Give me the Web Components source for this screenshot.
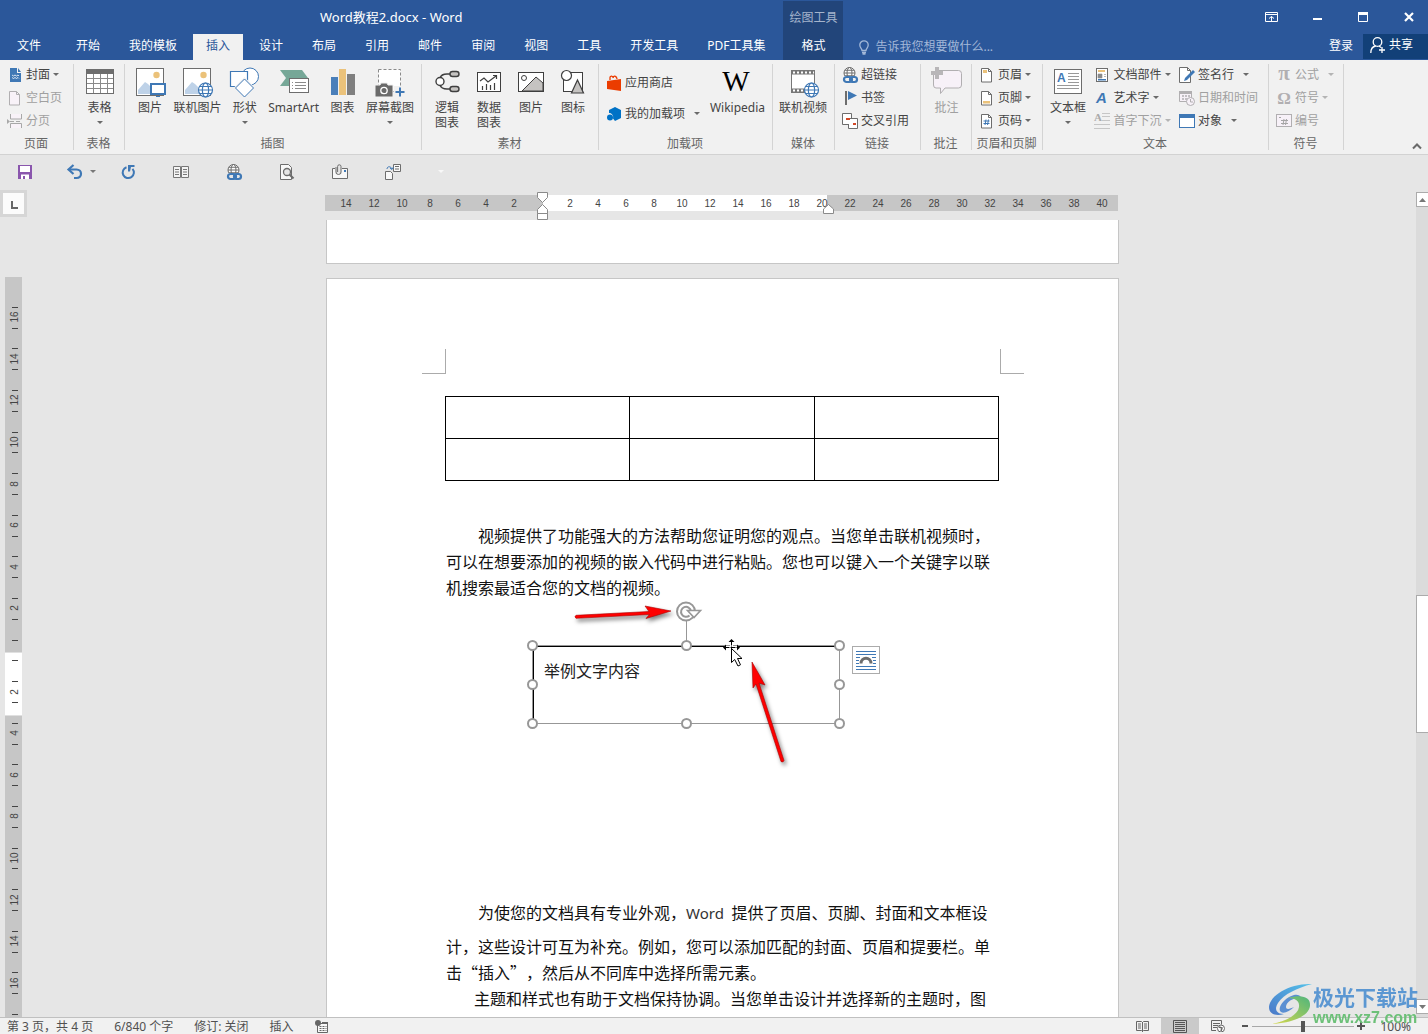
<!DOCTYPE html>
<html lang="zh-CN">
<head>
<meta charset="utf-8">
<title>Word教程2.docx - Word</title>
<style>
  html, body { height: 100%; margin: 0; }
  body { overflow: hidden; background: #e6e6e6; color: #444; font: 12px/16px "Noto Sans", "Noto Sans CJK SC", sans-serif; text-spacing-trim: space-all; }
</style>
</head>
<body>
<word-app></word-app>
<script>
const BTN = `button{font:inherit;color:inherit;background:none;border:0;margin:0;padding:0;cursor:pointer}svg{display:block}`;
function define(name, html, init) {
  const tpl = document.createElement('template');
  tpl.innerHTML = html;
  customElements.define(name, class extends HTMLElement {
    constructor() {
      super();
      this.attachShadow({ mode: 'open' }).append(tpl.content.cloneNode(true));
    }
    connectedCallback() { if (init && !this.ready) { this.ready = true; init(this, this.shadowRoot); } }
  });
}

const globe = (x, y, r, c, w) => `<g fill="#fff" stroke="${c}" stroke-width="${w}"><circle cx="${x}" cy="${y}" r="${r}"/><ellipse cx="${x}" cy="${y}" rx="${r * .45}" ry="${r}" fill="none"/><path fill="none" d="M${x - r} ${y}h${2 * r}M${x - r * .85} ${y - r * .5}h${r * 1.7}M${x - r * .85} ${y + r * .5}h${r * 1.7}"/></g>`;
const photo = `<rect x="2.5" y="1.5" width="27" height="27" fill="#fff" stroke="#6d6d6d"/><circle cx="22.500" cy="8" r="3.200" fill="#ebc27a"/><path d="M4 27V23L11 15l3 2 10 10z" fill="#bed2e8"/>`;
const chain = `<g fill="none" stroke="#3f78b5" stroke-width="2.200"><rect x="2" y="10" width="8" height="5" rx="2.500"/><rect x="8" y="10" width="7" height="5" rx="2.500"/></g>`;
const sheet = (c = '#6d6d6d', f = '#fff') => `<path d="M2.500 1.500h7l3 3v10.500h-10z" fill="${f}" stroke="${c}"/><path d="M9.500 1.500v3h3" fill="none" stroke="${c}"/>`;
const ICONS = {
  cover: `<path d="M3 1h7v5h4v9H3z" fill="#3f78b5"/><path d="M11 1l3 4h-3z" fill="#3f78b5"/><path d="M5 8l1.500 1L8 8l1.500 1L11 8l1 1M5 10.500l1.500 1 1.500-1 1.500 1 1.500-1 1 1" stroke="#fff" fill="none" stroke-width=".8"/>`,
  blank: sheet('#b1afb1', '#f8f2f8'),
  pagebreak: `<path d="M3.500 1v5h11V1M3.500 15v-4.500h11V15" fill="#f8f2f8" stroke="#a8a8a8"/><path d="M0 6l3 2.500L0 11z" fill="#a8a8a8"/><path d="M3 8.500h4M9 8.500h4" stroke="#a8a8a8"/>`,
  table: `<rect x="2.500" y="2.500" width="27" height="24" fill="#fff" stroke="#6d6d6d"/><path d="M2 2h28v5H2z" fill="#6d6d6d"/><path d="M9.500 7v19M16.500 7v19M23.500 7v19M3 11.500h26M3 16.500h26M3 21.500h26" stroke="#8a8a8a" fill="none"/>`,
  picture: photo + `<rect x="17" y="17" width="14" height="10" fill="#fff" stroke="#3f78b5" stroke-width="2"/><path d="M22 29h4v1h-4z" fill="#3f78b5"/>`,
  online: photo + globe(24.5, 23, 7, '#3f78b5', 1.2),
  shapes: `<circle cx="21" cy="9.500" r="8.500" fill="#fff" stroke="#3f78b5"/><path d="M1.500 4.500h17v15h-17z" fill="#fff" stroke="#3f78b5" stroke-width="1.200"/><path d="M15.500 12l9 9-9 9-9-9z" fill="#fff" stroke="#f1f1f1" stroke-width="3"/><path d="M15.500 12l9 9-9 9-9-9z" fill="#fff" stroke="#3f78b5"/>`,
  smartart: `<path d="M2 3h22l6 8-6 8H2l6-8z" fill="#76a797"/><rect x="11.500" y="11.500" width="19" height="14" fill="#fff" stroke="#6d6d6d"/><path d="M14 15.500h1M17 15.500h11M14 18.500h1M17 18.500h11M14 21.500h1M17 21.500h11" stroke="#8a8a8a"/>`,
  chart: `<path d="M4 10h7v18H4z" fill="#4a7fba"/><path d="M12 2h7v26h-7z" fill="#ebc27a"/><path d="M20 7h8v21h-8z" fill="#7f7f7f"/>`,
  screenshot: `<rect x="4.500" y="2.500" width="22" height="22" fill="#fff" stroke="#8a8a8a" stroke-dasharray="3 2"/><path d="M1 18h5l1-2h6l1 2h5v12H1z" fill="#6a6a6a" stroke="#f1f1f1"/><circle cx="10" cy="23.500" r="3.200" fill="#6a6a6a" stroke="#fff" stroke-width="1.300"/><path d="M20 19h11v11H20z" fill="#f1f1f1"/><path d="M26 20.500v9M21.500 25h9" stroke="#3f78b5" stroke-width="2"/>`,
  logic: `<g stroke="#3f3f3f" stroke-width="1.400" fill="none"><path d="M19 7h-3c-4 0-6 1-7 4M19 22h-3c-4 0-6-1-7-4"/><circle cx="9" cy="14.500" r="4" fill="#fff"/><rect x="19" y="4.500" width="9" height="5" rx="2.500" fill="#c5c3c1"/><rect x="19" y="19.500" width="9" height="5" rx="2.500" fill="#c5c3c1"/></g>`,
  data: `<rect x="4.500" y="5.500" width="23" height="19" fill="#fff" stroke="#3f3f3f"/><path d="M7 14l4-3 4 4 8-6M20 8.500h3.500V12M9.500 19v4M13.500 17v6M17.500 18v5M21.500 16v7" fill="none" stroke="#3f3f3f" stroke-width="1.200"/>`,
  image: `<rect x="3.500" y="5.500" width="25" height="19" fill="#fff" stroke="#3f3f3f"/><path d="M7 24l14-14 7 6v8z" fill="#c5c3c1" stroke="#3f3f3f"/><circle cx="9" cy="11" r="2.500" fill="#fff" stroke="#3f3f3f"/>`,
  glyphs: `<rect x="6.500" y="5.500" width="19" height="19" fill="#fff" stroke="#3f3f3f"/><circle cx="9.500" cy="8.500" r="5" fill="#fff" stroke="#3f3f3f" stroke-width="1.200"/><path d="M20.500 13l6 13h-12z" fill="#c5c3c1" stroke="#3f3f3f" stroke-width="1.200"/>`,
  store: `<path d="M1 6l14-2v12L1 14z" fill="#eb3c00"/><path d="M4 5V2.500C4 .5 7 .5 7.500 3M7 3c0-3 4-2 4 1" fill="none" stroke="#eb3c00" stroke-width="1.300"/>`,
  addins: `<path d="M9 1l6 3v8l-6 3-2-2.500C8 9 5 7 3 7V4z" fill="#0072c6"/><circle cx="4" cy="11.500" r="3" fill="#0072c6"/>`,
  wiki: `<text x="15" y="24" text-anchor="middle" font-family="Liberation Serif" font-size="29" fill="#000">W</text>`,
  video: `<rect x="4.500" y="3.500" width="23" height="22" fill="#fff" stroke="#777"/><path d="M5 5.500h23M5 23.500h15" stroke="#777" stroke-width="4"/><path d="M6 5.500h21M6 23.500h13" stroke="#fff" stroke-width="2" stroke-dasharray="2 2"/>` + globe(24.5, 23, 7, '#3f78b5', 1.2),
  link: globe(7.5, 6, 5.5, '#6d6d6d', 1) + `<path d="M1 9h15v7H1z" fill="#f1f1f1"/>` + chain,
  quicklink: globe(7.5, 6, 5.5, '#6d6d6d', 1) + `<path d="M1 9h15v7H1z" fill="#e6e6e6"/>` + chain,
  bookmark: `<path d="M3 1h2v14H3z" fill="#6d6d6d"/><path d="M6 1l9 4.500L6 10z" fill="#3f78b5"/>`,
  xref: `<path d="M.5.500h9v11h-9z" fill="#fff" stroke="#6d6d6d"/><path d="M6.500 5.500h9v10h-9z" fill="#fff" stroke="#6d6d6d"/><path d="M6 6h3.500v5H6z" fill="#fff"/><path d="M4 5h4v2H4zM11 10h3v2h-3z" fill="#d24726"/>`,
  comment: `<path d="M4.500 3.500h23q3 0 3 3V18q0 3-3 3H14l-4.500 5.500V21H5q-2.500 0-2.500-3V8z" fill="#f7f1f8" stroke="#b1afb1"/><path d="M4 0h4v4h4v4H8v4H4V8H0V4h4z" fill="#b8b6b8"/>`,
  header: sheet() + `<path d="M4 3h4v3H4z" fill="#ebc27a"/>`,
  footer: sheet() + `<path d="M4 11h7v2.500H4z" fill="#ebc27a"/>`,
  pageno: sheet() + `<path d="M7 6.500L6 12M9.500 6.500L8.500 12M4.500 8h6M4.500 10.500h6" stroke="#3f78b5" fill="none"/>`,
  textbox: `<rect x="2.500" y="2.500" width="27" height="24" fill="#fff" stroke="#6d6d6d"/><text x="5" y="15" font-family="Liberation Sans" font-size="12" font-weight="bold" fill="#3f78b5">A</text><path d="M16 6.500h11M16 9.500h11M16 12.500h11M16 15.500h11M5 18.500h22M5 21.500h22" stroke="#999"/>`,
  parts: `<rect x="2.500" y="1.500" width="11" height="13" fill="#fff" stroke="#6d6d6d"/><path d="M4 3h7v2H4z" fill="#ebc27a"/><path d="M4 7h4v4H4zM10 7.500h2M10 9.500h2" fill="#8a8a8a" stroke="#8a8a8a" stroke-width=".6"/><path d="M4 12h8v1.500H4z" fill="#3f78b5"/>`,
  wordart: `<text x="2" y="13" font-family="Liberation Sans" font-size="15" font-weight="bold" font-style="italic" fill="#3f78b5">A</text>`,
  dropcap: `<text x="0" y="8" font-family="Liberation Serif" font-size="11" font-weight="bold" fill="#aaa">A</text><path d="M8 .5h8M8 3.500h8M8 7.500h8M0 11.500h16M0 15.500h16" stroke="#c6c6c6"/>`,
  sign: `<path d="M.5.500h8l3 3v12h-11z" fill="#fff" stroke="#6d6d6d"/><path d="M8.500.500v3h3" fill="none" stroke="#6d6d6d"/><path d="M14 3l2 2-8 8-3 1 1-3z" fill="#3f78b5"/>`,
  date: `<path d="M.5 1.500h12v10H.5z" fill="#f7f1f8" stroke="#b1afb1"/><path d="M0 1h13v3H0z" fill="#b1afb1"/><path d="M3 6h2M6 6h2M9 6h2M3 9h2M6 9h2" stroke="#b1afb1" stroke-width="1.500"/><circle cx="11.500" cy="11.500" r="4" fill="#f7f1f8" stroke="#b1afb1"/><path d="M11.500 9v3H14" fill="none" stroke="#b1afb1"/>`,
  object: `<rect x=".5" y="1.500" width="15" height="13" fill="#fff" stroke="#3f78b5"/><path d="M0 1h16v4H0z" fill="#3f78b5"/>`,
  formula: `<text x="8" y="13" text-anchor="middle" font-family="Liberation Serif" font-size="21" font-weight="bold" fill="#b1afb1">π</text>`,
  omega: `<text x="8" y="14" text-anchor="middle" font-family="Liberation Serif" font-size="17" font-weight="bold" fill="#b1afb1">Ω</text>`,
  number: `<rect x=".5" y="1.500" width="15" height="12" fill="#f7f1f8" stroke="#b1afb1"/><path d="M3 4.500h2M8 6L7 12M10.500 6l-1 6M5 7.500h7M5 10.500h7" stroke="#a5a5a5" fill="none"/>`,
  save: `<path d="M1 1h14v14H1z" fill="#8a56ad"/><path d="M3 2h10v6H3z" fill="#fff"/><path d="M4 10.500h8V15H4z" fill="#fff"/><path d="M6 12h2v3H6z" fill="#8a56ad"/>`,
  undo: `<path d="M3 5.500h6.500c6 0 6 8.500 0 8.500H7" fill="none" stroke="#3f78b5" stroke-width="2.200"/><path d="M6.500 1L1.500 5.500l5 4.500" fill="none" stroke="#3f78b5" stroke-width="2.200"/>`,
  redo: `<path d="M6.500 3.200A5.600 5.600 0 1 0 12.500 4.800" fill="none" stroke="#3f78b5" stroke-width="2"/><path d="M8 1h6.500v2H11l-1 4.500H8z" fill="#3f78b5"/>`,
  columns: `<path d="M.5 2.500h7v11h-7zM8.500 2.500h7v11h-7z" fill="#f4f4f4" stroke="#777"/><path d="M2 5.500h4M2 8h4M2 10.500h4M10 5.500h4M10 8h4M10 10.500h4" stroke="#777"/>`,
  preview: `<path d="M1.500.500h8l3 3v12h-11z" fill="#f8f8f8" stroke="#6d6d6d"/><circle cx="8" cy="8" r="3.500" fill="#e6e6e6" stroke="#6d6d6d" stroke-width="1.300"/><path d="M10.500 10.500l4 4" stroke="#6d6d6d" stroke-width="2.200"/>`,
  attach: `<path d="M.5 4.500h15v10H.500z" fill="#f8f8f8" stroke="#6d6d6d"/><path d="M3 0h7v10H3z" fill="#e6e6e6"/><path d="M4 3v5a2.500 2.500 0 0 0 5 0V2.500a1.700 1.700 0 0 0-3.400 0V8" fill="none" stroke="#6d6d6d"/><path d="M12 6h2v2h-2z" fill="#3f78b5"/>`,
  insertdoc: `<path d="M.5 7.500h5l2 2v6h-7z" fill="#f8f8f8" stroke="#6d6d6d"/><path d="M8.500.500h7v7h-7z" fill="#f8f8f8" stroke="#6d6d6d"/><path d="M10 2.500h4M10 5h4" stroke="#6d6d6d"/><path d="M2 5c0-3 4-3 5 0M5 4l2 1.500L8.500 3" fill="none" stroke="#3f78b5"/>`
};

/* glyph drawn from the icon set */
define('ui-icon', `<style>:host{display:block;flex:none;width:var(--s,16px);height:var(--s,16px)}svg{display:block;width:100%;height:100%;overflow:visible}</style>`, (el, root) => {
  const n = el.getAttribute('size') || 16;
  el.style.setProperty('--s', n + 'px');
  root.innerHTML += `<svg viewBox="0 0 ${n} ${n}" aria-hidden="true">${ICONS[el.getAttribute('name')]}</svg>`;
});

define('ribbon-button', `<style>${BTN}
  :host{display:block;flex:none}
  button{display:flex;align-items:center;gap:3px;height:23px;white-space:nowrap}
  i{border:3px solid transparent;border-top-color:#6a6a6a;border-bottom:0;display:none}
  :host([caret]) i{display:block}
  :host([caret=far]) i{margin-left:6px}
  :host([big]) button{flex-direction:column;gap:1px;height:auto;min-width:32px;padding-top:4px;line-height:15px}
  :host([big]) i{margin:5px auto 0}
  :host([off]) button{color:#a0a0a0}
  :host([off]) i{border-top-color:#b4b4b4}
</style><button><ui-icon></ui-icon><span><slot></slot></span><i></i></button>`, (el, root) => {
  const old = root.querySelector('ui-icon'), ic = document.createElement('ui-icon');
  ic.setAttribute('name', el.getAttribute('icon'));
  ic.setAttribute('size', el.hasAttribute('big') ? 32 : 16);
  old.replaceWith(ic);
  if (el.hasAttribute('off')) root.querySelector('button').disabled = true;
});

define('ribbon-group', `<style>
  :host{display:flex;flex-direction:column;flex:none;box-sizing:border-box;width:var(--w);padding:3px 0 0;background:linear-gradient(#d4d4d4,#d4d4d4) right 4px/1px 86px no-repeat}
  .body{display:flex;justify-content:space-between;height:69px;padding:0 var(--r,8px) 0 var(--l,8px)}
  .label{text-align:center;line-height:16px;margin-top:4px;padding-right:2px;color:#666}
  ::slotted(div){display:flex;flex-direction:column}
  ::slotted(.two){gap:8px;padding-top:8px}
  ::slotted([big]:only-child){margin:auto;margin-top:0}
</style><div class="body"><slot></slot></div><div class="label"></div>`, (el, root) => {
  root.querySelector('.label').textContent = el.getAttribute('label');
});

define('ribbon-bar', `<style>${BTN}
  :host{display:flex;flex:none;height:94px;background:#f1f1f1;border-bottom:1px solid #d2d2d2}
  .fold{margin:auto 4px 4px auto;width:14px;height:8px}
</style>
<ribbon-group label="页面" style="--w:74px;--l:7px"><div><ribbon-button icon="cover" caret>封面</ribbon-button><ribbon-button icon="blank" off>空白页</ribbon-button><ribbon-button icon="pagebreak" off>分页</ribbon-button></div></ribbon-group>
<ribbon-group label="表格" style="--w:51px"><ribbon-button big caret icon="table">表格</ribbon-button></ribbon-group>
<ribbon-group label="插图" style="--w:297px;--l:9px"><ribbon-button big icon="picture">图片</ribbon-button><ribbon-button big icon="online">联机图片</ribbon-button><ribbon-button big caret icon="shapes">形状</ribbon-button><ribbon-button big icon="smartart">SmartArt</ribbon-button><ribbon-button big icon="chart">图表</ribbon-button><ribbon-button big caret icon="screenshot">屏幕截图</ribbon-button></ribbon-group>
<ribbon-group label="素材" style="--w:177px;--l:9px;--r:10px"><ribbon-button big icon="logic">逻辑<br>图表</ribbon-button><ribbon-button big icon="data">数据<br>图表</ribbon-button><ribbon-button big icon="image">图片</ribbon-button><ribbon-button big icon="glyphs">图标</ribbon-button></ribbon-group>
<ribbon-group label="加载项" style="--w:174px;--l:7px"><div class="two"><ribbon-button icon="store">应用商店</ribbon-button><ribbon-button caret="far" icon="addins">我的加载项</ribbon-button></div><ribbon-button big icon="wiki">Wikipedia</ribbon-button></ribbon-group>
<ribbon-group label="媒体" style="--w:62px;--l:6px;--r:8px"><ribbon-button big icon="video">联机视频</ribbon-button></ribbon-group>
<ribbon-group label="链接" style="--w:86px;--l:7px"><div><ribbon-button icon="link">超链接</ribbon-button><ribbon-button icon="bookmark">书签</ribbon-button><ribbon-button icon="xref">交叉引用</ribbon-button></div></ribbon-group>
<ribbon-group label="批注" style="--w:51px"><ribbon-button big off icon="comment">批注</ribbon-button></ribbon-group>
<ribbon-group label="页眉和页脚" style="--w:71px;--l:7px"><div><ribbon-button caret icon="header">页眉</ribbon-button><ribbon-button caret icon="footer">页脚</ribbon-button><ribbon-button caret icon="pageno">页码</ribbon-button></div></ribbon-group>
<ribbon-group label="文本" style="--w:226px;--l:7px;--r:11px"><ribbon-button big caret icon="textbox">文本框</ribbon-button><div><ribbon-button caret icon="parts">文档部件</ribbon-button><ribbon-button caret icon="wordart">艺术字</ribbon-button><ribbon-button caret off icon="dropcap">首字下沉</ribbon-button></div><div><ribbon-button caret="far" icon="sign">签名行</ribbon-button><ribbon-button off icon="date">日期和时间</ribbon-button><ribbon-button caret="far" icon="object">对象</ribbon-button></div></ribbon-group>
<ribbon-group label="符号" style="--w:75px;--l:7px"><div><ribbon-button caret="far" off icon="formula">公式</ribbon-button><ribbon-button caret off icon="omega">符号</ribbon-button><ribbon-button off icon="number">编号</ribbon-button></div></ribbon-group>
<button class="fold" aria-label="折叠功能区"><svg width="14" height="8"><path d="M3 6.500l4-4 4 4" fill="none" stroke="#6a6a6a" stroke-width="2"/></svg></button>`);

define('word-header', `<style>${BTN}
  :host{display:grid;flex:none;grid-template:34px 26px/auto auto 1fr;background:#2b579a;color:#fff}
  h1{margin:0;font:inherit;font-size:13px;text-align:center;line-height:35px;padding-left:4px}
  nav{display:flex;gap:3px}
  nav button,.ctx button{padding:0 13px 3px;height:26px;white-space:nowrap}
  nav button:first-child{padding:0 19px 3px 17px}
  nav button.on{background:#f1f1f1;color:#2b579a}
  .ctx{grid-area:1/2/3/3;margin:1px 0 0 5px;display:flex;flex-direction:column;background:#22457a;width:60px;text-align:center}
  .ctx span{line-height:33px;color:#a5b4cc}
  .win{grid-area:1/3;display:flex;justify-content:flex-end;gap:8px}
  .win button{width:38px;display:grid;place-items:center}
  .tools{grid-area:2/3;display:flex;align-items:center}
  nav{grid-area:2/1}
  label{display:flex;align-items:center;gap:6px;padding-left:16px;flex:1;line-height:23px}
  input{flex:1;min-width:0;font:inherit;color:#fff;background:none;border:0;padding:0 0 2px;outline:0;height:24px;box-sizing:border-box}
  input::placeholder{color:#a3b8d8;opacity:1}
  a{color:#fff;text-decoration:none;padding:0 10px 2px}
  .share{align-self:stretch;width:65px;margin-bottom:1px;background:#124078;display:flex;align-items:center;gap:3px;padding:0 0 3px 7px}
</style>
<h1>Word教程2.docx - Word</h1>
<nav><button>文件</button><button>开始</button><button>我的模板</button><button class="on">插入</button><button>设计</button><button>布局</button><button>引用</button><button>邮件</button><button>审阅</button><button>视图</button><button>工具</button><button>开发工具</button><button>PDF工具集</button></nav>
<div class="ctx"><span>绘图工具</span><button>格式</button></div>
<div class="win">
 <button aria-label="功能区显示选项"><svg width="13" height="11"><path d="M.5.500h12v9H.500zM0 2.500h13M6.500 9V4.500M4 6.500l2.500-2 2.500 2" fill="none" stroke="#fff"/></svg></button>
 <button aria-label="最小化"><svg width="9" height="8"><path d="M0 5h9v2H0z" fill="#fff"/></svg></button>
 <button aria-label="最大化"><svg width="10" height="10"><path d="M.5.500h9v9h-9zM0 1.500h10" fill="none" stroke="#fff"/><path d="M0 0h10v3H0z" fill="#fff"/></svg></button>
 <button aria-label="关闭"><svg width="10" height="10"><path d="M1 1l8 8M9 1l-8 8" stroke="#fff" stroke-width="2.200"/></svg></button>
</div>
<div class="tools">
 <label><svg width="10" height="15"><path d="M3 10.500C3 8.500.800 8 .800 5a4.200 4.200 0 0 1 8.400 0c0 3-2.200 3.500-2.200 5.500zM3 12.500h4M3.500 14h3" fill="none" stroke="#a3b8d8" stroke-width="1.300"/></svg><input aria-label="告诉我您想要做什么" placeholder="告诉我您想要做什么..."></label>
 <a href="#">登录</a>
 <button class="share"><svg width="16" height="17"><circle cx="7.500" cy="5" r="4.300" fill="none" stroke="#fff" stroke-width="1.300"/><path d="M.8 16c0-4 2-6.500 5-7M9 9l2 1.500M12 10v6M9 13h6" fill="none" stroke="#fff" stroke-width="1.300"/></svg>共享</button>
</div>`);

define('quick-bar', `<style>${BTN}
  :host{display:flex;flex:none;height:33px;align-items:center;padding-left:17px}
  button{display:flex;align-items:center;gap:7px;width:53px}
  button:first-of-type{width:50px}
  i{border:3px solid transparent;border-top-color:#777;border-bottom:0}
  button:last-child i{border-top-color:#f8f8f8}
</style>
<button aria-label="保存"><ui-icon name="save"></ui-icon></button><button aria-label="撤消"><ui-icon name="undo"></ui-icon><i></i></button><button aria-label="重复"><ui-icon name="redo"></ui-icon></button><button aria-label="分栏"><ui-icon name="columns"></ui-icon></button><button aria-label="超链接"><ui-icon name="quicklink"></ui-icon></button><button aria-label="打印预览"><ui-icon name="preview"></ui-icon></button><button aria-label="附件"><ui-icon name="attach"></ui-icon></button><button aria-label="插入文件"><ui-icon name="insertdoc"></ui-icon></button><button aria-label="自定义"><i></i></button>`);

define('h-ruler', `<style>:host{display:block}svg{display:block;margin:auto;overflow:visible}text{font:10px "Liberation Sans",sans-serif;fill:#444;text-anchor:middle}</style>`, (el, root) => {
  let s = '<rect x="-1" y="7" width="793" height="16" fill="#c6c6c6"/><rect x="217" y="7" width="284" height="16" fill="#fff"/>';
  for (let n = -14; n <= 40; n += 2) if (n) s += `<text x="${216 + n * 14}" y="19">${Math.abs(n)}</text>`;
  s += '<g fill="#fff" stroke="#8a8a8a"><path d="M211.500 4.500h10v5l-5 5-5-5zM216.500 16.500l5 5v4h-10v-4zM211.500 25.500h10v6h-10zM502.500 16.500l5 4.500v4.500h-10V21z"/></g>';
  root.innerHTML += `<svg width="793" height="32">${s}</svg>`;
});

define('v-ruler', `<style>:host{display:block;height:740px;overflow:hidden}svg{display:block}text{font:10px "Liberation Sans",sans-serif;fill:#444;text-anchor:middle}</style>`, (el, root) => {
  let s = '<rect width="17" height="760" fill="#c6c6c6"/><path d="M0 375h17v64H0z" fill="#e0e0e0"/><rect y="376" width="17" height="62" fill="#fff"/>';
  const at = n => Math.round(373 + n * 20.8);
  for (let n = -16; n <= 16; n += 2) if (n) s += `<text transform="translate(13 ${at(n)}) rotate(-90)">${Math.abs(n)}</text>`;
  for (let n = -16.5; n <= 17.5; n++) s += `<path d="M7 ${at(n)}h6v1H7z" fill="#444"/>`;
  root.innerHTML += `<svg width="17" height="760">${s}</svg>`;
});

define('text-shape', `<style>${BTN}
  :host{display:block;position:relative;height:291px;padding-top:1px}
  .txt{position:absolute;left:98px;top:57px;line-height:26px;color:#222}
  .art{position:absolute;left:0;top:1px;overflow:visible}
  button{position:absolute;left:406px;top:46px;width:28px;height:28px;box-sizing:border-box;background:#fff;border:1px solid #ababab;display:grid;place-items:center}
  .red{filter:drop-shadow(2px 3px 2px rgba(0,0,0,.5))}
</style>
<div class="txt">举例文字内容</div>
<svg class="art" width="554" height="291" aria-hidden="true">
 <path d="M240.500 20v24M86.500 44.500h307v78h-307z" fill="none" stroke="#979797"/>
 <path d="M393 45.500H87.500V122" fill="none" stroke="#000"/>
 <g id="h" fill="#fff" stroke="#979797" stroke-width="2"></g>
 <circle cx="240" cy="10.500" r="9" fill="#fff" stroke="#979797" stroke-width="2"/>
 <path d="M243.500 14.500a5 5 0 1 1 1.500-4.500" fill="none" stroke="#979797" stroke-width="2"/>
 <path d="M241.500 9.500h13l-6.500 7z" fill="#fff" stroke="#979797" stroke-width="1.600"/>
 <g class="red"><path d="M130 14.300L203 10.500 199 5l26 5-25 7.500 3.500-4L130 17.300q-2-1.500 0-3z" fill="#fe0000" stroke="#a00" stroke-width=".6"/></g>
 <g class="red"><path d="M306 61l13 23-6-2L338 159.500q-1 2.500-3 1L310 83l-3 4z" fill="#fe0000" stroke="#a00" stroke-width=".6"/></g>
 <g transform="translate(285.500 46.500)"><path d="M-7 0H7M0-7V7" stroke="#fff" stroke-width="3"/><path d="M-7 0H7M0-7V3" stroke="#000" stroke-dasharray="5 1"/><path d="M-8.500 0l3-3v6zM8.500 0l-3-3v6zM0-8.500l-3 3h6z"/><path d="M0 1v14l3.200-3 3.300 6.500 2.500-1.200L6 11h4.500z" fill="#fff" stroke="#000"/></g>
</svg>
<button aria-label="布局选项"><svg width="20" height="20"><path d="M0 1.500h20M0 4.500h20M0 7.500h4M16 7.500h4M0 10.500h3M17 10.500h3M0 13.500h3M17 13.500h3M0 16.500h20M0 19.500h20" stroke="#3f78b5"/><path d="M5 13.500c0-7 10-7 10 0" fill="none" stroke="#6d6d6d" stroke-width="3"/></svg></button>`, (el, root) => {
  let s = '';
  for (const y of [44.5, 83.5, 122.5]) for (const x of [86.5, 240.5, 393.5]) if (!(x === 240.5 && y === 83.5)) s += `<circle cx="${x}" cy="${y}" r="4.500"/>`;
  root.getElementById('h').innerHTML = s;
});

define('doc-view', `<style>
  :host{display:flex;flex-direction:column;align-items:center;gap:14px;overflow:hidden;min-height:0}
  .page{flex:none;box-sizing:border-box;width:793px;background:#fff;border:1px solid #c6c6c6;color:#111;font:16px/26px "Noto Sans CJK SC",sans-serif}
  .prev{height:44px;border-top:0}
  .main{padding-top:70px;min-height:900px}
  .crop{display:flex;justify-content:space-between;padding:0 94px 0 95px}
  .crop span{width:23px;height:24px;border:solid #ababab;border-width:0 1px 1px 0}
  .crop span+span{border-width:0 0 1px 1px}
  .text{padding:22px 118px 0 119px}
  table{border-collapse:collapse;width:554px;margin:0 0 41px -1px;table-layout:fixed}
  td{border:1px solid #000;height:41px;padding:0}
  p{margin:0;text-indent:32px}
  p.near{text-indent:28px}
  p.tall::first-line{line-height:40px}
  .latin{font-family:"Noto Sans",sans-serif;font-size:15px;padding-right:4px;color:#333}
</style>
<div class="page prev"></div>
<div class="page main">
 <div class="crop"><span></span><span></span></div>
 <div class="text">
  <table><tr><td></td><td></td><td></td></tr><tr><td></td><td></td><td></td></tr></table>
  <p>视频提供了功能强大的方法帮助您证明您的观点。当您单击联机视频时，可以在想要添加的视频的嵌入代码中进行粘贴。您也可以键入一个关键字以联机搜索最适合您的文档的视频。</p>
  <text-shape></text-shape>
  <p class="tall">为使您的文档具有专业外观，<span class="latin">Word</span> 提供了页眉、页脚、封面和文本框设计，这些设计可互为补充。例如，您可以添加匹配的封面、页眉和提要栏。单击“插入”，然后从不同库中选择所需元素。</p>
  <p class="near">主题和样式也有助于文档保持协调。当您单击设计并选择新的主题时，图</p>
 </div>
</div>`);

define('scroll-bar', `<style>${BTN}
  :host{display:flex;flex-direction:column;background:#dbdbdb}
  button{height:15px;background:#fff;border:1px solid #ababab;display:grid;place-items:center;border-right:0}
  .pad{height:4px;background:#e6e6e6}
  .a{flex:389}.thumb{flex:137;background:#fff;border:1px solid #ababab;border-right:0}.b{flex:267}
  .end{height:3px}
</style><div class="pad"></div><button aria-label="向上"><svg width="7" height="4"><path d="M0 4h7L3.500 0z" fill="#777"/></svg></button><div class="a"></div><div class="thumb"></div><div class="b"></div><button aria-label="向下"><svg width="7" height="4"><path d="M0 0h7L3.500 4z" fill="#777"/></svg></button><div class="end"></div>`);

define('work-area', `<style>
  :host{display:grid;flex:1;min-height:0;grid-template:32px minmax(0,1fr)/29px minmax(0,1fr) 12px}
  .corner{margin-top:2px;width:27px;height:27px;box-sizing:border-box;border:3px solid #d6d6d6;background:#fbfbfb;display:flex}
  .corner i{margin:8px 0 0 8px;width:5px;height:6px;border:solid #666;border-width:0 0 2px 2px}
  .side{overflow:hidden;padding:57px 0 0 5px}
  scroll-bar{grid-area:1/3/3/4}
</style>
<div class="corner"><i></i></div><h-ruler></h-ruler><scroll-bar></scroll-bar>
<div class="side"><v-ruler></v-ruler></div><doc-view></doc-view>`);

define('status-bar', `<style>${BTN}
  :host{display:flex;flex:none;height:16px;overflow:hidden;border-top:1px solid #c0c0c0;background:#f1f1f1;align-items:center;color:#505050;padding:0 17px 0 7px;line-height:17px;white-space:nowrap}
  .left{display:flex;align-items:center;gap:21px;flex:1}
  .views{display:flex;align-self:stretch}
  .views button{width:38px;display:grid;place-items:center}
  .views .on{background:#cacaca}
  .zoom{display:flex;align-items:center;gap:3px;padding-left:4px}
  .zoom button{width:8px}
  .val{padding-left:12px}
  input{-webkit-appearance:none;appearance:none;width:102px;height:14px;margin:0;background:linear-gradient(#a8a8a8,#a8a8a8) center/100% 1px no-repeat}
  input::-webkit-slider-thumb{-webkit-appearance:none;width:4px;height:11px;background:#555}
</style>
<div class="left"><span>第 3 页，共 4 页</span><span>6/840 个字</span><span>修订: 关闭</span><span>插入</span>
<svg width="13" height="13"><path d="M2.500 3.500h10v9h-10z" fill="#f8f8f8" stroke="#666"/><path d="M7 2h6v2H7z" fill="#666"/><circle cx="3" cy="3" r="3" fill="#666"/><path d="M4.500 6.500h7M4.500 8.500h7M4.500 10.500h7" stroke="#666" stroke-dasharray="2 1"/></svg></div>
<div class="views">
 <button aria-label="阅读视图"><svg width="13" height="12"><path d="M.5 1.500h5l1 1 1-1h5v9h-5l-1 1-1-1h-5zM6.500 2v10M2 4h3M2 6h3M2 8h3M8 4h3M8 6h3M8 8h3" fill="none" stroke="#666"/></svg></button>
 <button class="on" aria-label="页面视图"><svg width="14" height="13"><path d="M.5.500h13v12H.500z" fill="none" stroke="#555"/><path d="M2 2.500h10M2 4.500h10M2 6.500h10M2 8.500h10M2 10.500h10" stroke="#555"/></svg></button>
 <button aria-label="Web 版式"><svg width="14" height="12"><path d="M5 10.500H.500V.500h10v4M2 3.500h7M2 5.500h5M2 7.500h4" fill="none" stroke="#666"/><circle cx="10" cy="8.500" r="3.500" fill="#fff" stroke="#666"/><path d="M8 7l3 1-1 3" fill="none" stroke="#666" stroke-width="1.500"/></svg></button>
</div>
<div class="zoom"><button aria-label="缩小"><svg width="7" height="8"><path d="M1 3h6v2H1z" fill="#555"/></svg></button><input type="range" aria-label="显示比例" min="0" max="200" value="100"><button aria-label="放大"><svg width="8" height="8"><path d="M4 0v8M0 4h8" stroke="#555" stroke-width="2"/></svg></button><span class="val">100%</span></div>`);

define('site-mark', `<style>
  :host{position:fixed;right:10px;bottom:7px;display:flex;pointer-events:none;white-space:nowrap}
  svg{display:block}
  div{display:flex;flex-direction:column}
  b{font:bold 21px/26px "Noto Sans CJK SC",sans-serif;color:#5b97d2}
  span{font:bold 16px/18px "Liberation Sans",sans-serif;color:#6cc078}
</style>
<svg width="45" height="44" viewBox="0 0 45 44" aria-hidden="true">
 <defs><linearGradient id="a" x1="0" y1="1" x2="1" y2="0"><stop offset="0" stop-color="#4a78c8"/><stop offset="1" stop-color="#55c2ea"/></linearGradient><linearGradient id="b" x1="0" y1="1" x2="1" y2="0"><stop offset="0" stop-color="#d8d84c"/><stop offset="1" stop-color="#4fb57c"/></linearGradient></defs>
 <path d="M44 1C22 0 2 12 1 24c0 8 8 9 15 7-8 0-10-5-6-11C16 11 29 5 44 1z" fill="url(#a)"/>
 <path d="M26 12c-11 3-17 14-13 17 3 2 9-1 13-5-4 2-8 3-8 0 0-5 8-10 16-9-2-3-5-4-8-3z" fill="#5b8fd2"/>
 <path d="M20 15c14-4 23-1 22 8-1 10-18 17-38 18 14-3 26-9 27-17 1-6-4-9-11-9z" fill="url(#b)"/>
</svg><div><b>极光下载站</b><span>www.xz7.com</span></div>`);

define('word-app', `<style>:host{display:flex;flex-direction:column;height:100vh}</style>
<word-header></word-header><ribbon-bar></ribbon-bar><quick-bar></quick-bar><work-area></work-area><status-bar></status-bar><site-mark></site-mark>`);
</script>
</body>
</html>
